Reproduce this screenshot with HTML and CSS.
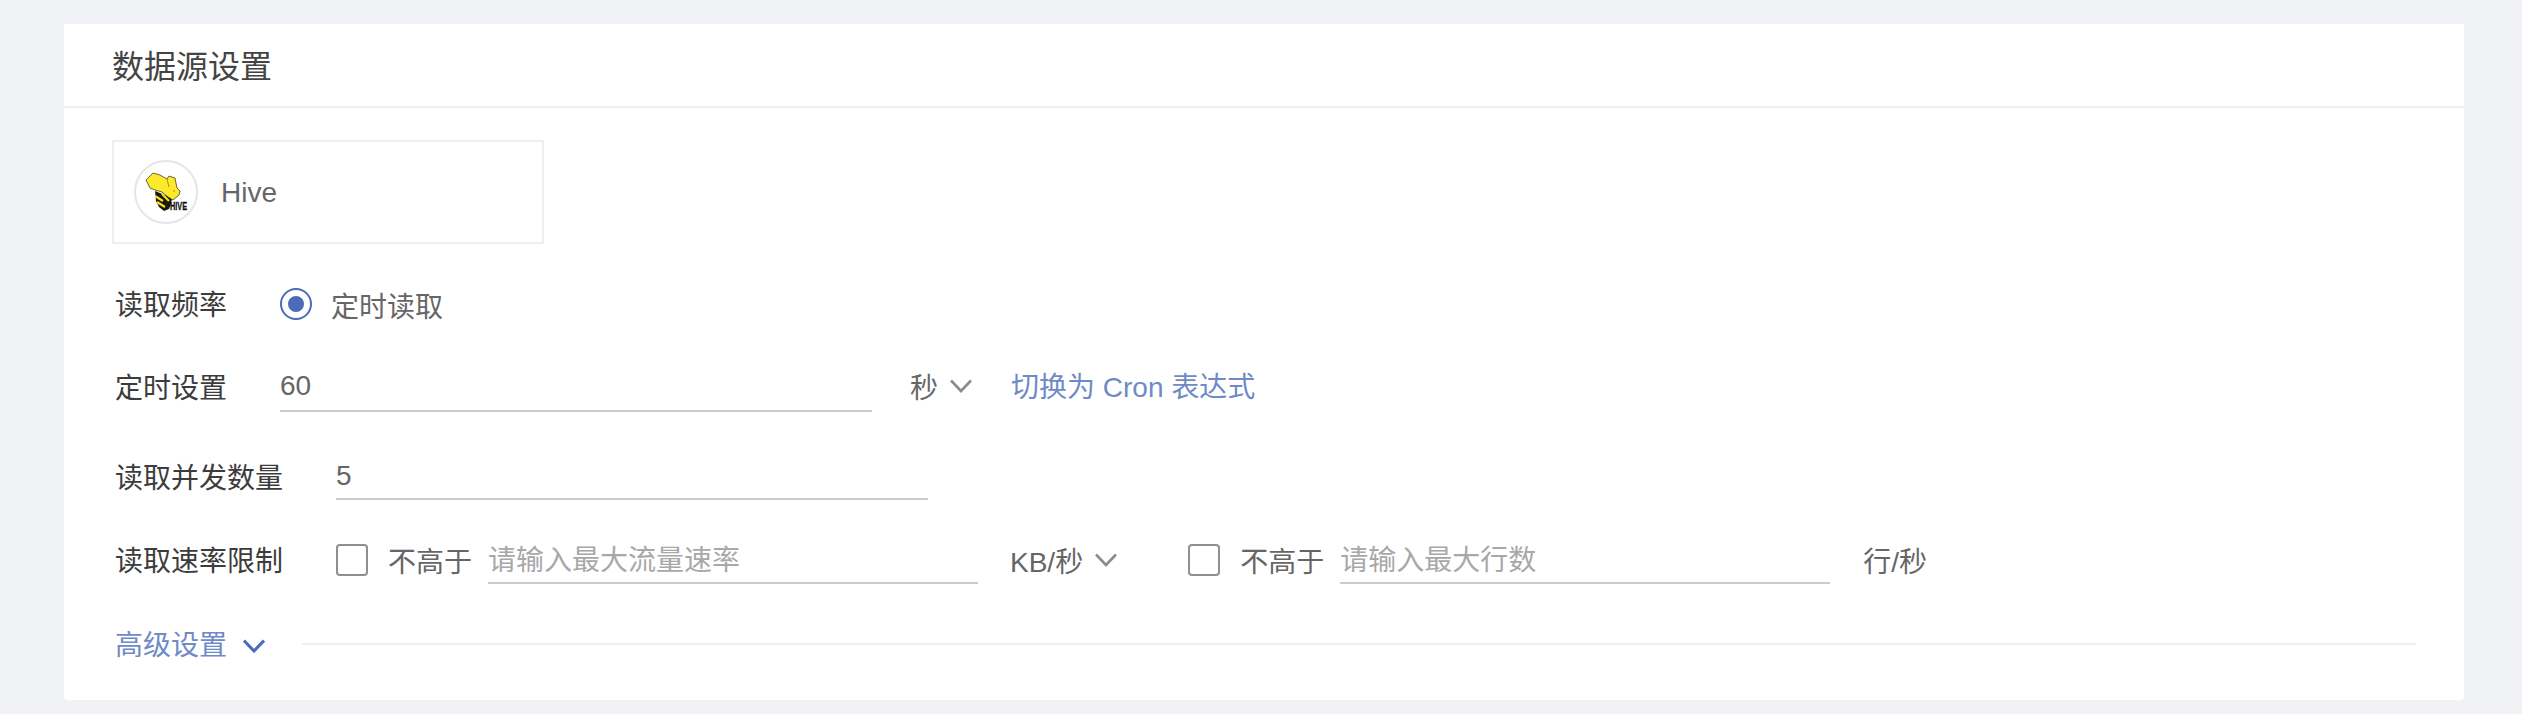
FILE: index.html
```html
<!DOCTYPE html>
<html lang="zh-CN">
<head>
<meta charset="utf-8">
<title>数据源设置</title>
<link rel="stylesheet" href="styles.css">
</head>
<body>
<section class="card">
  <header class="card-head">数据源设置</header>
  <div class="card-body">
    <div class="source">
      <span class="source-logo">
        <svg width="60" height="60" viewBox="0 0 60 60">
          <path d="M19 29 L36 36 L35 42 L33 47 L28 49 L23 45 L20 39 Z" fill="#1a180c"/>
          <path d="M19 34 L27 39 M21 40 L29 45 M26 32 L33 39" stroke="#f7de23" stroke-width="2.2" fill="none"/>
          <path d="M10 18 L17 11 L24 13 L31 17 L33 14 L39 16 L41 26 L44 29 L43 33 L37 38 L32 35 L26 30 L19 28 L14 26 Z" fill="#fde92b" stroke="#2c2a10" stroke-width=".7" stroke-linejoin="round"/>
          <path d="M31 17 L33 25 M37 29 L39 29" stroke="#8a7a10" stroke-width=".8" fill="none"/>
          <text x="34" y="48" class="logo-text" textLength="17" lengthAdjust="spacingAndGlyphs">HIVE</text>
        </svg>
      </span>
      <span class="source-name">Hive</span>
    </div>

    <div class="row row-freq">
      <span class="label label-short">读取频率</span>
      <span class="radio"><span class="radio-dot"></span></span>
      <span class="value radio-text">定时读取</span>
    </div>

    <div class="row row-timer">
      <span class="label label-short">定时设置</span>
      <span class="field field-timer">60</span>
      <span class="value unit-sec">秒</span>
      <svg class="chev chev-grey" width="22" height="14" viewBox="0 0 22 14"><path d="M1 1.5 L11 12 L21 1.5"/></svg>
      <a class="link cron">切换为 Cron 表达式</a>
    </div>

    <div class="row row-conc">
      <span class="label label-long">读取并发数量</span>
      <span class="field field-conc">5</span>
    </div>

    <div class="row row-rate">
      <span class="label label-long">读取速率限制</span>
      <span class="check"></span>
      <span class="value limit">不高于</span>
      <span class="field field-rate placeholder">请输入最大流量速率</span>
      <span class="value unit-kb">KB/秒</span>
      <svg class="chev chev-grey" width="22" height="14" viewBox="0 0 22 14"><path d="M1 1.5 L11 12 L21 1.5"/></svg>
      <span class="check check-second"></span>
      <span class="value limit">不高于</span>
      <span class="field field-rate placeholder">请输入最大行数</span>
      <span class="value unit-rows">行/秒</span>
    </div>

    <div class="row row-adv">
      <a class="link adv-link">高级设置</a>
      <svg class="chev chev-blue" width="22" height="14" viewBox="0 0 22 14"><path d="M1 1.5 L11 12 L21 1.5"/></svg>
      <span class="adv-line"></span>
    </div>
  </div>
</section>
</body>
</html>
```
FILE: styles.css
```css
* { box-sizing: border-box; }
html, body { margin: 0; padding: 0; }
body {
  width: 2522px;
  height: 714px;
  overflow: hidden;
  background: #f0f2f6;
  padding: 24px 58px 14px 64px;
  font-family: "Liberation Sans", "Noto Sans CJK SC", sans-serif;
  font-size: 28px;
  color: #333;
}
.card {
  height: 676px;
  background: #fff;
  border-radius: 0 0 4px 4px;
}
.card-head {
  height: 84px;
  padding: 20px 48px 0;
  border-bottom: 2px solid #eeeeee;
  font-size: 32px;
  line-height: 46px;
  color: #444;
}
.card-body { padding: 32px 48px 0; }
.source {
  width: 432px;
  height: 104px;
  border: 2px solid #eeeeee;
  padding-left: 20px;
  display: flex;
  align-items: center;
}
.source-logo {
  width: 64px;
  height: 64px;
  border: 2px solid #e6e6e6;
  border-radius: 50%;
  display: flex;
  align-items: center;
  justify-content: center;
  overflow: hidden;
}
.logo-text { font-family: "Liberation Sans", sans-serif; font-size: 11px; font-weight: 700; fill: #111; stroke: #111; stroke-width: .3; }
.source-name { margin-left: 23px; margin-top: 2px; color: #666; line-height: 42px; }
.row { display: flex; align-items: center; padding-left: 3px; height: 40px; }
.row-freq { margin-top: 40px; }
.row-timer { margin-top: 42px; }
.row-conc { margin-top: 50px; }
.row-rate { margin-top: 44px; }
.row-adv { margin-top: 44px; }
.label { color: #3c3c3c; flex: none; }
.label-short { width: 165px; }
.label-long { width: 221px; }
.row-freq .label { margin-bottom: 2px; }
.row-rate .label { margin-bottom: 2px; }
.value { color: #666; flex: none; }
.radio {
  width: 32px;
  height: 32px;
  border: 2px solid #4a6bb8;
  border-radius: 50%;
  display: flex;
  align-items: center;
  justify-content: center;
}
.radio-dot { width: 16px; height: 16px; border-radius: 50%; background: #4a6bb8; }
.radio-text { margin-left: 19px; margin-top: 1px; }
.field {
  flex: none;
  align-self: flex-start;
  height: 44px;
  line-height: 40px;
  border-bottom: 2px solid #cccccc;
  color: #666;
}
.field-timer { width: 592px; height: 46px; }
.field-conc { width: 592px; }
.field-rate { width: 490px; margin-left: 16px; line-height: 42px; }
.placeholder { color: #a8a8a8; }
.unit-sec { margin-left: 38px; }
.chev { flex: none; fill: none; stroke-width: 2.6; }
.chev-grey { stroke: #8c8c8c; margin-left: 12px; }
.chev-blue { stroke: #4a6bb8; stroke-width: 3; margin-left: 16px; margin-top: 4px; }
.link { color: #6f8ac6; flex: none; }
.cron { margin-left: 39px; margin-bottom: 3px; }
.adv-link { margin-bottom: 2px; }
.check {
  width: 32px;
  height: 32px;
  border: 2px solid #8f8f8f;
  border-radius: 4px;
  flex: none;
}
.limit { margin-left: 20px; }
.unit-kb { margin-left: 32px; }
.check-second { margin-left: 71px; }
.unit-rows { margin-left: 33px; }
.adv-line { flex: 1; height: 2px; background: #eeeeee; margin-left: 37px; }
```
